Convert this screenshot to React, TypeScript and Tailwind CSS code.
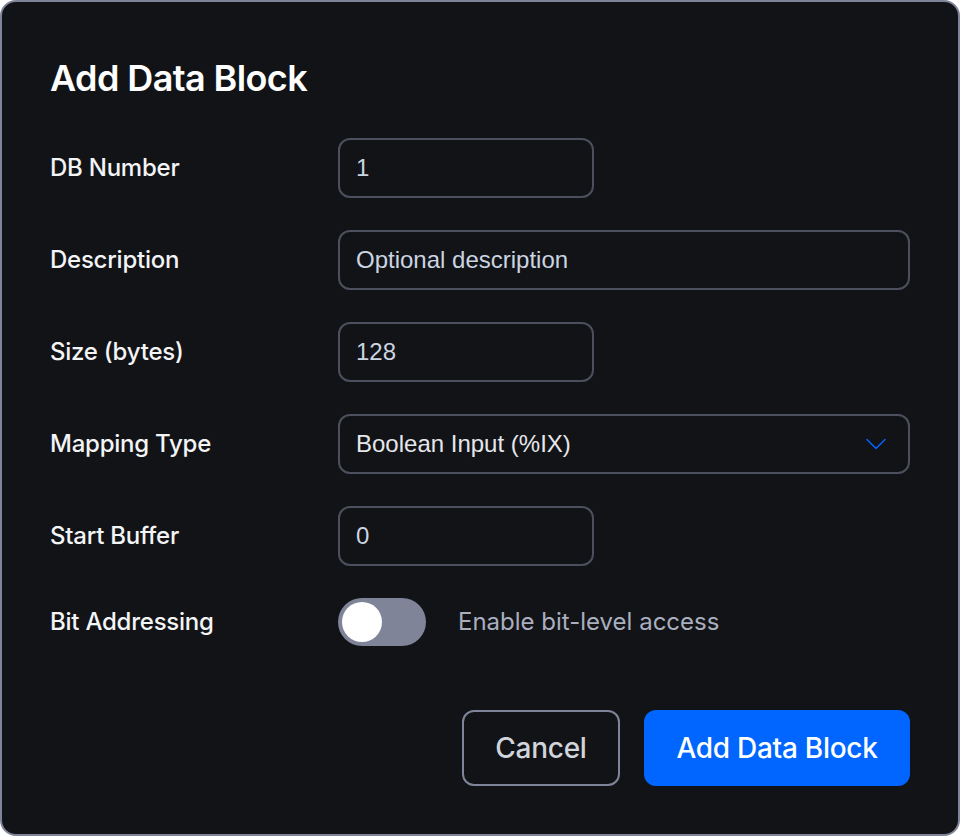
import { ChevronDown } from "lucide-react";

function Row({ label, children }: { label: string; children: React.ReactNode }) {
  return (
    <div className="flex items-center">
      <label className="w-[288px] shrink-0 text-[24px] font-medium tracking-[-0.01em] text-[#f3f4f6]">{label}</label>
      {children}
    </div>
  );
}

function Field({ value, wide }: { value: string; wide?: boolean }) {
  return (
    <div
      className={`flex h-[60px] items-center rounded-xl border-2 border-[#4b505c] px-4 font-['Liberation_Sans',sans-serif] text-[24px] text-[#cbd5e1] ${
        wide ? "w-[572px]" : "w-[256px]"
      }`}
    >
      {value}
    </div>
  );
}

export default function App() {
  return (
    <div className="h-[836px] w-[960px] rounded-2xl border-2 border-[#7f8498] bg-[#121317] px-[48px] pt-[54px] font-['Inter',sans-serif]">
      <h2 className="h-[44px] text-[36px] leading-[44px] font-semibold tracking-[-0.6px] text-white">Add Data Block</h2>

      <div className="mt-[38px] flex flex-col gap-[32px]">
        <Row label="DB Number">
          <Field value="1" />
        </Row>
        <Row label="Description">
          <Field value="Optional description" wide />
        </Row>
        <Row label="Size (bytes)">
          <Field value="128" />
        </Row>
        <Row label="Mapping Type">
          <div className="flex h-[60px] w-[572px] items-center justify-between rounded-xl border-2 border-[#4b505c] pr-[14px] pl-4 font-['Liberation_Sans',sans-serif] text-[24px] text-[#e5e7eb]">
            Boolean Input (%IX)
            <ChevronDown className="h-[36px] w-[36px] text-[#0066ff]" strokeWidth={1} />
          </div>
        </Row>
        <Row label="Start Buffer">
          <Field value="0" />
        </Row>
      </div>

      <div className="mt-[32px] flex items-center">
        <label className="w-[288px] shrink-0 text-[24px] font-medium tracking-[-0.01em] text-[#f3f4f6]">Bit Addressing</label>
        <div className="flex h-[48px] w-[88px] items-center rounded-full bg-[#7f8498] pl-1">
          <div className="h-[40px] w-[40px] rounded-full bg-white" />
        </div>
        <span className="ml-[32px] text-[24px] text-[#a9afbf]">Enable bit-level access</span>
      </div>

      <div className="mt-[64px] flex justify-end gap-[24px]">
        <button className="h-[76px] w-[158px] rounded-xl border-2 border-[#7f8498] text-[28px] font-medium tracking-[-0.01em] text-[#d1d5db]">
          Cancel
        </button>
        <button className="h-[76px] w-[266px] rounded-xl bg-[#0066ff] text-[28px] font-medium tracking-[-0.01em] text-white">
          Add Data Block
        </button>
      </div>
    </div>
  );
}
